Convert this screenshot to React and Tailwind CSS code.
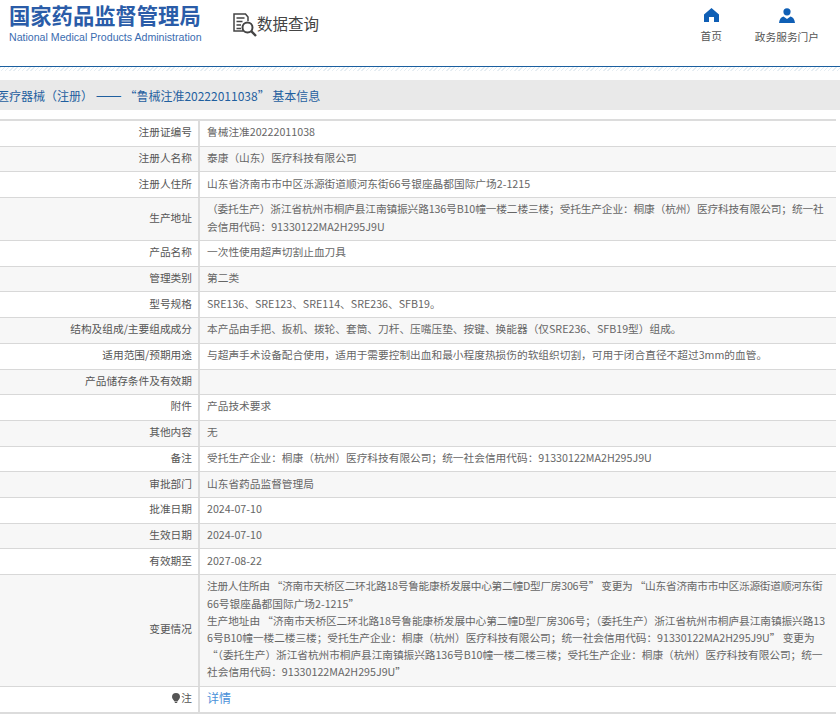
const rows = [
  { label: "注册证编号", value: "鲁械注准20222011038" },
  { label: "注册人名称", value: "泰康（山东）医疗科技有限公司" },
  { label: "注册人住所", value: "山东省济南市市中区泺源街道顺河东街66号银座晶都国际广场2-1215" },
  {
    label: "生产地址",
    value: (
      <>
        <span className="tracking-[-0.13px] whitespace-nowrap">（委托生产）浙江省杭州市桐庐县江南镇振兴路136号B10幢一楼二楼三楼；受托生产企业：桐康（杭州）医疗科技有限公司；统一社</span>
        <br />
        会信用代码：91330122MA2H295J9U
      </>
    ),
  },
  { label: "产品名称", value: "一次性使用超声切割止血刀具" },
  { label: "管理类别", value: "第二类" },
  { label: "型号规格", value: "SRE136、SRE123、SRE114、SRE236、SFB19。" },
  { label: "结构及组成/主要组成成分", value: "本产品由手把、扳机、拨轮、套筒、刀杆、压嘴压垫、按键、换能器（仅SRE236、SFB19型）组成。" },
  { label: "适用范围/预期用途", value: "与超声手术设备配合使用，适用于需要控制出血和最小程度热损伤的软组织切割，可用于闭合直径不超过3mm的血管。" },
  { label: "产品储存条件及有效期", value: "" },
  { label: "附件", value: "产品技术要求" },
  { label: "其他内容", value: "无" },
  { label: "备注", value: "受托生产企业：桐康（杭州）医疗科技有限公司；统一社会信用代码：91330122MA2H295J9U" },
  { label: "审批部门", value: "山东省药品监督管理局" },
  { label: "批准日期", value: "2024-07-10" },
  { label: "生效日期", value: "2024-07-10" },
  { label: "有效期至", value: "2027-08-22" },
  {
    label: "变更情况",
    value: (
      <>
        <span className="tracking-[-0.26px] whitespace-nowrap">注册人住所由 “济南市天桥区二环北路18号鲁能康桥发展中心第二幢D型厂房306号” 变更为 “山东省济南市市中区泺源街道顺河东街</span>
        <br />
        66号银座晶都国际广场2-1215”
        <br />
        <span className="tracking-[-0.08px] whitespace-nowrap">生产地址由 “济南市天桥区二环北路18号鲁能康桥发展中心第二幢D型厂房306号；（委托生产）浙江省杭州市桐庐县江南镇振兴路13</span>
        <br />
        <span className="tracking-[-0.05px] whitespace-nowrap">6号B10幢一楼二楼三楼；受托生产企业：桐康（杭州）医疗科技有限公司；统一社会信用代码：91330122MA2H295J9U” 变更为</span>
        <br />
        <span className="tracking-[-0.06px] whitespace-nowrap">“（委托生产）浙江省杭州市桐庐县江南镇振兴路136号B10幢一楼二楼三楼；受托生产企业：桐康（杭州）医疗科技有限公司；统一</span>
        <br />
        社会信用代码：91330122MA2H295J9U”
      </>
    ),
  },
];

function DataIcon() {
  return (
    <svg width="24" height="24" viewBox="0 0 24 24" fill="none" stroke="#444" strokeWidth="1.5">
      <path d="M10 18H1V1h11.500l2.500 3v4" />
      <path d="M3.500 5h8M3.500 8.500h6M3.500 12h4.500M3.500 15.500h4.500" strokeWidth="1.300" />
      <circle cx="14.500" cy="14.500" r="5" strokeWidth="2" />
      <path d="M18.200 18.200l4.800 4.800" strokeWidth="2.400" />
    </svg>
  );
}

function HomeIcon() {
  return (
    <svg width="15" height="14" viewBox="0 0 15 14" fill="#0f5fb5">
      <path d="M7.500 0L15 6.500V14H10V9H5v5H0V6.500z" />
    </svg>
  );
}

function UserIcon() {
  return (
    <svg width="16" height="15" viewBox="0 0 16 15" fill="#0f5fb5">
      <circle cx="8" cy="3.800" r="3.600" />
      <path d="M0 15c.4-4 2-6 4.500-6.600L8 11l3.500-2.600C14 9 15.600 11 16 15z" />
    </svg>
  );
}

function Row({ label, value, index }) {
  return (
    <div className={`grid grid-cols-[200px_1fr] border-b border-[#d8d8d8] ${index % 2 === 0 ? "bg-white" : "bg-[#f7f7f7]"}`}>
      <div className="flex items-center justify-end border-r-2 border-[#dcdcdc] pr-[6px] pb-[3px] text-[#555]">{label}</div>
      <div className="min-h-[24.7px] pt-[2.250px] pr-[8px] pb-[5.250px] pl-[7px] text-[#666]">{value}</div>
    </div>
  );
}

export default function App() {
  return (
    <div className="h-[719px] w-[840px] overflow-hidden bg-white font-['Noto_Sans_CJK_SC','Liberation_Sans',sans-serif] text-[10.7px] leading-[17.2px]">
      <header className="flex h-[66px] items-start justify-between">
        <div className="flex">
          <div className="ml-[9px] mt-[3px] w-[200px]">
            <div className="text-[21.300px] leading-[24px] font-bold whitespace-nowrap text-[#2a5ca8]">国家药品监督管理局</div>
            <div className="mt-[3px] font-['Liberation_Sans',sans-serif] text-[10.600px] leading-[14px] whitespace-nowrap text-[#3a6cb0]">National Medical Products Administration</div>
          </div>
          <div className="ml-[24px] mt-[13px] flex items-start">
            <DataIcon />
            <span className="text-[15.500px] leading-[20px] text-[#444]">数据查询</span>
          </div>
        </div>
        <nav className="mr-[21px] mt-[8px] flex gap-[33px] text-[#555]">
          <div className="flex flex-col items-center gap-[5px]">
            <HomeIcon />
            <span>首页</span>
          </div>
          <div className="flex flex-col items-center gap-[5px]">
            <UserIcon />
            <span>政务服务门户</span>
          </div>
        </nav>
      </header>
      <div className="h-[5px] border-t-[1.500px] border-[#1a5f9f] bg-[repeating-linear-gradient(135deg,#e6edf2_0,#e6edf2_1px,#fff_1px,#fff_3px)]" />
      <div className="mt-[9px] flex h-[30px] items-center bg-[#e9e9e9] text-[12px] leading-[17px] whitespace-pre text-[#1f5f9f]">
        <span className="-ml-[3px]">
          医疗器械（注册） <span className="text-[15.500px]">——</span> “鲁械注准20222011038” 基本信息
        </span>
      </div>
      <section className="mt-[9px] w-[836px] border-t-2 border-[#dcdcdc]">
        {rows.map((row, index) => (
          <Row key={row.label} label={row.label} value={row.value} index={index} />
        ))}
        <div className="grid grid-cols-[200px_1fr] border-b-2 border-[#dcdcdc] bg-white">
          <div className="flex items-center justify-end gap-[1px] border-r-2 border-[#dcdcdc] pr-[6px] pb-[3px] text-[#555]">
            <svg width="8" height="10" viewBox="0 0 8 10" fill="#555">
              <path d="M4 0a4 4 0 0 1 4 4c0 2-2 3-2.500 4.500H2.500C2 7 0 6 0 4a4 4 0 0 1 4-4zM2.800 9h2.400v1H2.800z" />
            </svg>
            注
          </div>
          <div className="min-h-[25px] pt-[2.250px] pr-[8px] pb-[5.250px] pl-[7px] text-[12px] text-[#4a90d9]">详情</div>
        </div>
      </section>
    </div>
  );
}
